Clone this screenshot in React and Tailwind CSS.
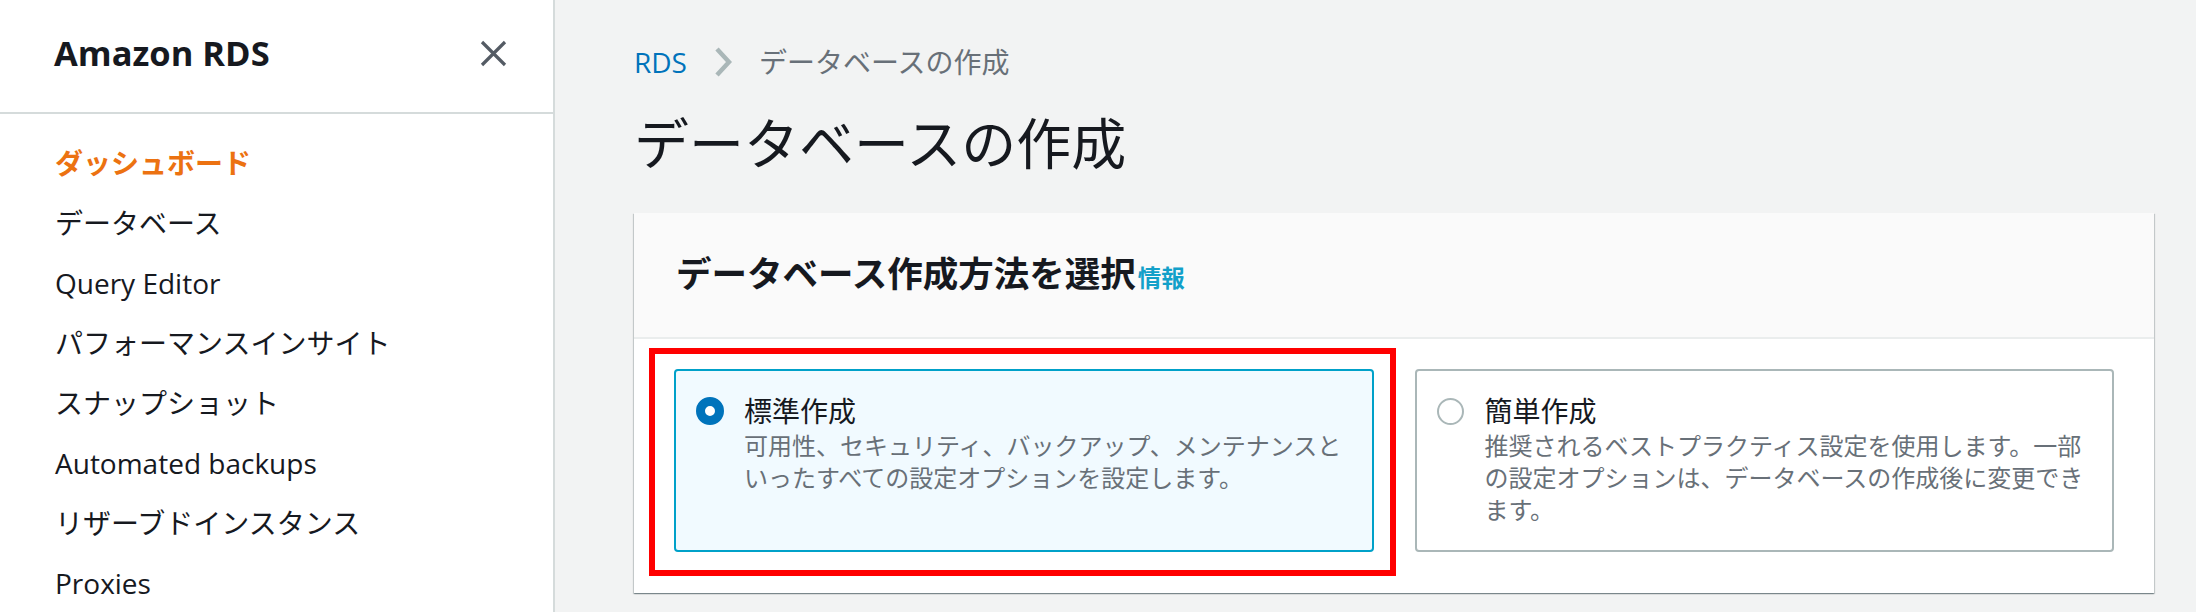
import React from "react";

const navItems = [
  "データベース",
  "Query Editor",
  "パフォーマンスインサイト",
  "スナップショット",
  "Automated backups",
  "リザーブドインスタンス",
  "Proxies",
];

function Tile({ selected, title, lines, highlight }) {
  return (
    <div
      className={
        selected
          ? "relative flex gap-[20px] rounded-[4px] border-2 border-[#00a1c9] bg-[#f1faff] pt-[22px] pl-[20px] pr-[20px] pb-[24px]"
          : "relative flex gap-[20px] rounded-[4px] border-2 border-[#aab7b8] bg-white pt-[22px] pl-[20px] pr-[20px] pb-[24px]"
      }
    >
      <div className="mt-[4px] flex h-[28px] w-[28px] shrink-0 items-center justify-center">
        {selected ? (
          <div className="h-[28px] w-[28px] rounded-full border-[9px] border-[#0073bb] bg-white" />
        ) : (
          <div className="h-[27px] w-[27px] rounded-full border-2 border-[#aab7b8] bg-white" />
        )}
      </div>
      <div className="min-w-0">
        <div className="text-[28px] leading-[36px] text-[#16191f]">{title}</div>
        <div className="mt-[1px] text-[24px] leading-[32px] text-[#687078]">
          {lines.map((l, i) => (
            <div key={i} className="whitespace-nowrap">
              {l}
            </div>
          ))}
        </div>
      </div>
      {highlight && (
        <div className="pointer-events-none absolute -left-[27px] -right-[24px] -top-[23px] -bottom-[26px] border-[6px] border-[#ff0000]" />
      )}
    </div>
  );
}

export default function App() {
  return (
    <div className="flex h-screen w-full overflow-hidden bg-[#f2f3f3] font-['Open_Sans','Noto_Sans_CJK_JP',sans-serif]">
      <aside className="h-full w-[555px] shrink-0 border-r-2 border-[#d5dbdb] bg-white">
        <div className="flex h-[114px] items-center justify-between border-b-2 border-[#d5dbdb] pl-[54px] pr-[46px]">
          <span className="mt-[-5px] text-[34.5px] font-bold leading-none text-[#16191f]">Amazon RDS</span>
          <svg width="27" height="27" viewBox="0 0 27 27" className="mt-[-5px]">
            <path d="M2 2 L25 25 M25 2 L2 25" stroke="#545b64" strokeWidth="3.2" fill="none" />
          </svg>
        </div>
        <nav className="pt-[19px] pl-[55px]">
          <div className="flex h-[60px] items-center text-[28px] font-bold text-[#ec7211]">ダッシュボード</div>
          {navItems.map((n) => (
            <div key={n} className="flex h-[60px] items-center text-[28px] text-[#16191f]">
              {n}
            </div>
          ))}
        </nav>
      </aside>

      <main className="min-w-0 flex-1 pl-[79px] pr-[42px] pt-[44px]">
        <div className="flex h-[36px] items-center gap-[27px] text-[28px]">
          <span className="text-[#0073bb]">RDS</span>
          <svg width="18" height="30" viewBox="0 0 18 30">
            <path d="M3 2 L15 15 L3 28" stroke="#aab7b8" strokeWidth="4.5" fill="none" />
          </svg>
          <span className="text-[#687078]">データベースの作成</span>
        </div>
        <h1 className="mt-[31px] text-[55px] font-normal leading-[64px] text-[#16191f]">データベースの作成</h1>

        <section className="mt-[38px] bg-white shadow-[0_1px_1px_0_rgba(0,28,36,0.3),1px_1px_1px_0_rgba(0,28,36,0.15),-1px_1px_1px_0_rgba(0,28,36,0.15)]">
          <div className="flex items-baseline border-b-2 border-[#eaeded] bg-[#fafafa] pl-[42px] pr-[40px] pt-[38px] pb-[41px]">
            <h2 className="text-[35.5px] font-bold leading-[44px] text-[#16191f]">データベース作成方法を選択</h2>
            <span className="ml-[2px] text-[23.5px] font-bold text-[#12a0c9]">情報</span>
          </div>
          <div className="grid grid-cols-2 gap-[41px] px-[40px] pt-[30px] pb-[41px]">
            <Tile
              selected
              highlight
              title="標準作成"
              lines={[
                "可用性、セキュリティ、バックアップ、メンテナンスと",
                "いったすべての設定オプションを設定します。",
              ]}
            />
            <Tile
              title="簡単作成"
              lines={[
                "推奨されるベストプラクティス設定を使用します。一部",
                "の設定オプションは、データベースの作成後に変更でき",
                "ます。",
              ]}
            />
          </div>
        </section>
      </main>
    </div>
  );
}
